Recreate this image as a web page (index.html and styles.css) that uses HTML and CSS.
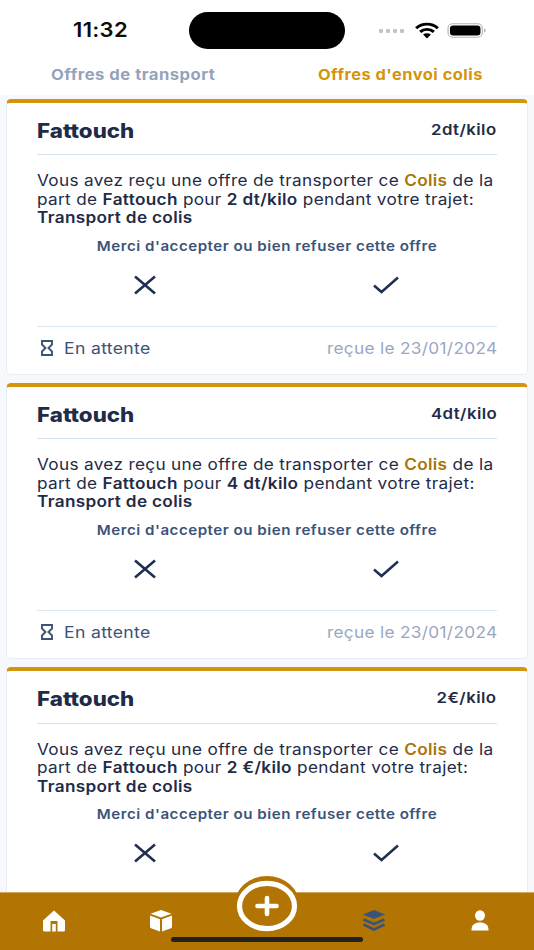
FILE: index.html
```html
<!DOCTYPE html>
<html lang="fr">
<head>
<meta charset="utf-8">
<title>Offres</title>
<link rel="stylesheet" href="styles.css">
</head>
<body>
<div class="screen">
  <header class="top">
    <div class="status">
      <span class="time">11:32</span>
      <span class="island"></span>
      <span class="status-icons">
        <span class="dots"><i></i><i></i><i></i><i></i></span>
        <svg class="wifi" width="26" height="17" viewBox="0 0 24 17" preserveAspectRatio="none"><path d="M12 16.5 8.4 12.6a5.2 5.2 0 0 1 7.2 0Z" fill="#000"/><path d="M5.7 9.9a9 9 0 0 1 12.6 0M2 6.2a14.4 14.4 0 0 1 20 0" fill="none" stroke="#000" stroke-width="2.9"/></svg>
        <svg class="battery" width="40" height="15" viewBox="0 0 38 15" preserveAspectRatio="none"><rect x="1" y="0.8" width="32.5" height="13.4" rx="4.4" fill="none" stroke="#b4b4b4" stroke-width="1.1"/><rect x="2.8" y="2.6" width="29" height="9.8" rx="3" fill="#000"/><path d="M35.2 5.4c1 .3 1.500 1.100 1.500 2.100s-.5 1.800-1.500 2.100Z" fill="#a8a8a8"/></svg>
      </span>
    </div>
    <nav class="tabs">
      <span class="tab">Offres de transport</span>
      <span class="tab tab-active">Offres d'envoi colis</span>
    </nav>
  </header>
  <main class="list">
    <article class="card">
      <div class="card-head"><h2 class="name">Fattouch</h2><span class="price">2dt/kilo</span></div>
      <p class="msg">Vous avez reçu une offre de transporter ce <b class="colis">Colis</b> de la part de <b>Fattouch</b> pour <b>2 dt/kilo</b> pendant votre trajet: <b>Transport de colis</b></p>
      <p class="ask">Merci d'accepter ou bien refuser cette offre</p>
      <div class="actions">
        <svg class="act" width="24" height="20" viewBox="0 0 24 20"><path d="M2 1.500 22 18.500M22 1.500 2 18.500" fill="none" stroke="#1f2f52" stroke-width="2.600"/></svg>
        <svg class="act" width="26" height="20" viewBox="0 0 26 20"><path d="M1 10.500 8.500 17 25 2.500" fill="none" stroke="#1f2f52" stroke-width="2.500"/></svg>
      </div>
      <div class="card-foot">
        <span class="state"><svg width="14" height="16" viewBox="0 0 14 16"><path d="M2 1h10v3.500L8.500 8 12 11.500V15H2v-3.500L5.500 8 2 4.500Z" fill="none" stroke="#3b5378" stroke-width="1.900"/></svg><span class="state-text">En attente</span></span>
        <span class="date">reçue le 23/01/2024</span>
      </div>
    </article>
    <article class="card">
      <div class="card-head"><h2 class="name">Fattouch</h2><span class="price">4dt/kilo</span></div>
      <p class="msg">Vous avez reçu une offre de transporter ce <b class="colis">Colis</b> de la part de <b>Fattouch</b> pour <b>4 dt/kilo</b> pendant votre trajet: <b>Transport de colis</b></p>
      <p class="ask">Merci d'accepter ou bien refuser cette offre</p>
      <div class="actions">
        <svg class="act" width="24" height="20" viewBox="0 0 24 20"><path d="M2 1.500 22 18.500M22 1.500 2 18.500" fill="none" stroke="#1f2f52" stroke-width="2.600"/></svg>
        <svg class="act" width="26" height="20" viewBox="0 0 26 20"><path d="M1 10.500 8.500 17 25 2.500" fill="none" stroke="#1f2f52" stroke-width="2.500"/></svg>
      </div>
      <div class="card-foot">
        <span class="state"><svg width="14" height="16" viewBox="0 0 14 16"><path d="M2 1h10v3.500L8.500 8 12 11.500V15H2v-3.500L5.500 8 2 4.500Z" fill="none" stroke="#3b5378" stroke-width="1.900"/></svg><span class="state-text">En attente</span></span>
        <span class="date">reçue le 23/01/2024</span>
      </div>
    </article>
    <article class="card">
      <div class="card-head"><h2 class="name">Fattouch</h2><span class="price">2€/kilo</span></div>
      <p class="msg">Vous avez reçu une offre de transporter ce <b class="colis">Colis</b> de la part de <b>Fattouch</b> pour <b>2 €/kilo</b> pendant votre trajet: <b>Transport de colis</b></p>
      <p class="ask">Merci d'accepter ou bien refuser cette offre</p>
      <div class="actions">
        <svg class="act" width="24" height="20" viewBox="0 0 24 20"><path d="M2 1.500 22 18.500M22 1.500 2 18.500" fill="none" stroke="#1f2f52" stroke-width="2.600"/></svg>
        <svg class="act" width="26" height="20" viewBox="0 0 26 20"><path d="M1 10.500 8.500 17 25 2.500" fill="none" stroke="#1f2f52" stroke-width="2.500"/></svg>
      </div>
    </article>
  </main>
  <footer class="bar">
    <svg class="fab" width="66" height="58" viewBox="0 0 66 58"><ellipse cx="33" cy="30" rx="33" ry="30" fill="#b27503"/><ellipse cx="33" cy="30" rx="27.500" ry="22.700" fill="none" stroke="#fff" stroke-width="5.200"/><path d="M33 22v16M23.500 30h19" stroke="#fff" stroke-width="4.600" stroke-linecap="round"/></svg>
    <svg class="nav-icon" width="24" height="22" viewBox="0 0 24 22"><path fill-rule="evenodd" d="M12 .5 23 10.500V20a1.500 1.500 0 0 1-1.500 1.500H2.500A1.500 1.500 0 0 1 1 20V10.500ZM8.500 11v10.500h7V11Z" fill="#fff"/><rect x="10.200" y="14" width="3.600" height="7.500" fill="#fff"/></svg>
    <svg class="nav-icon" width="24" height="22" viewBox="0 0 24 22"><path d="M12 0 22.500 3.700 12 7.500 1.500 3.700Z M1 5.500 11 9.200V21.500L2 18.300A1.500 1.500 0 0 1 1 17ZM23 5.500 13 9.200V21.500L22 18.300A1.500 1.500 0 0 0 23 17Z" fill="#fff"/></svg>
    <span class="nav-gap"></span>
    <svg class="nav-icon" width="24" height="22" viewBox="0 0 24 22"><path d="M12 0 23 4.500 12 9 1 4.500Z" fill="#3b5378"/><path d="M1.500 9.500 12 14 22.500 9.500M1.500 14.500 12 19.500 22.500 14.500" fill="none" stroke="#3b5378" stroke-width="2.600"/></svg>
    <svg class="nav-icon" width="24" height="22" viewBox="0 0 24 22"><ellipse cx="12" cy="5.500" rx="5" ry="5.200" fill="#fff"/><path d="M3.500 19.500C3.500 15 7 12.500 12 12.500S20.500 15 20.500 19.500V20.500H3.500Z" fill="#fff"/></svg>
    <span class="home-ind"></span>
  </footer>
</div>
</body>
</html>
```
FILE: styles.css
```css
* { box-sizing: border-box; }
html, body { margin: 0; padding: 0; }
body { font-family: Inter, "Liberation Sans", sans-serif; background: #f6f8fc; color: #1f2b47; }
.screen { position: relative; width: 534px; height: 950px; overflow: hidden; display: flex; flex-direction: column; }
.top { background: #fff; height: 95px; flex: none; }
.status { height: 60px; padding: 0 47px 0 73px; display: flex; align-items: center; justify-content: space-between; position: relative; }
.time { font-size: 20px; font-weight: 600; color: #0c0c0c; letter-spacing: 0.3px; transform: scaleX(1.1); transform-origin: left; }
.island { position: absolute; left: 189px; top: 12px; width: 156px; height: 37px; border-radius: 19px; background: #000; }
.status-icons { display: flex; align-items: center; gap: 7px; }
.dots { display: flex; gap: 2.500px; margin-right: 3px; margin-top: 2px; }
.dots i { width: 4.500px; height: 4px; border-radius: 1px; background: #c4c4c4; display: block; }
.tabs { display: flex; justify-content: space-between; padding: 5px 51px 0; font-size: 15px; font-weight: 700; letter-spacing: 0.45px; line-height: 20px; }
.tab { color: #94a3bb; transform: scaleX(1.108); transform-origin: left; }
.tab-active { color: #d4940c; transform: scaleX(1.093); transform-origin: right; }
.list { flex: 1; padding: 3.500px 6px 0; display: flex; flex-direction: column; gap: 8px; min-height: 0; }
.card { flex: none; height: 276.400px; background: #fff; border: 1px solid #e8edf5; border-top: 4px solid #d4940c; border-radius: 5px; padding: 0 30px; }
.card-head { height: 52.500px; display: flex; justify-content: space-between; border-bottom: 1px solid #d5e3f1; }
.name { margin: 15px 0 0; font-size: 20px; font-weight: 800; line-height: 26px; color: #1f2b47; letter-spacing: 0; transform: scaleX(1.115); transform-origin: left; }
.price { margin-top: 17px; font-size: 15px; font-weight: 600; line-height: 20px; letter-spacing: 0.4px; transform: scaleX(1.12); transform-origin: right; }
.msg { margin: 17px 0 0; width: 415px; font-size: 15.500px; line-height: 18.500px; letter-spacing: 0.3px; color: #1f2b47; transform: scaleX(1.108); transform-origin: left; }
.msg b { font-weight: 600; }
.msg .colis { color: #a87408; }
.ask { margin: 8px 0 0; text-align: center; font-size: 13.500px; font-weight: 600; line-height: 20px; letter-spacing: 0.45px; color: #3b5378; transform: scaleX(1.12); }
.actions { height: 40px; margin-top: 9px; display: flex; align-items: center; justify-content: space-between; padding: 0 98px 0 96px; }
.card-foot { margin-top: 21px; height: 44px; border-top: 1.500px solid #dbe7f2; display: flex; align-items: center; justify-content: space-between; }
.state { display: flex; align-items: center; gap: 10px; padding-left: 3px; font-size: 16px; color: #3b5378; letter-spacing: 0.3px; }
.state-text { transform: scaleX(1.1); transform-origin: left; }
.date { font-size: 16px; color: #9aa7bf; letter-spacing: 0.3px; transform: scaleX(1.076); transform-origin: right; }
.bar { position: absolute; left: 0; right: 0; bottom: 0; height: 58px; background: #b27503; border-top: 1px solid #d2a860; display: flex; justify-content: space-between; align-items: flex-start; padding: 17px 42px 0; }
.nav-icon { flex: none; }
.nav-gap { width: 24px; }
.fab { position: absolute; left: 234px; top: -17px; }
.home-ind { position: absolute; left: 171px; bottom: 8px; width: 192px; height: 5px; border-radius: 3px; background: #222; }
```
